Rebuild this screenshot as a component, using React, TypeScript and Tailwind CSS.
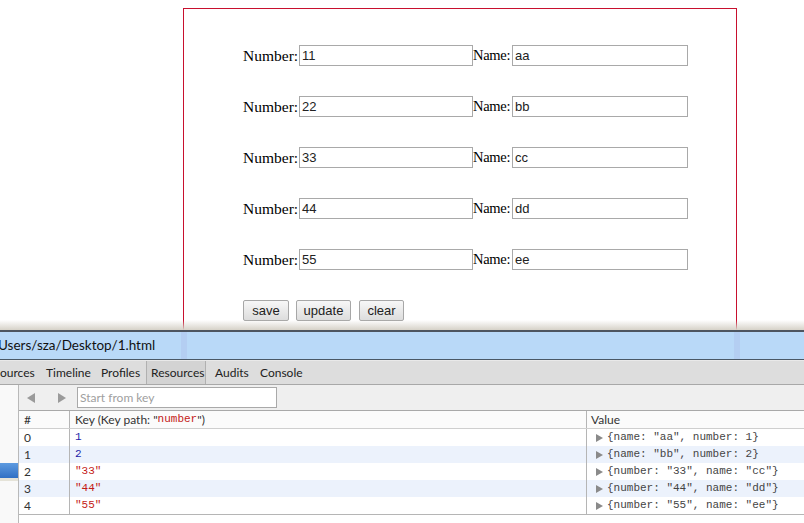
import React from "react";

const formRows = [
  ["11", "aa"],
  ["22", "bb"],
  ["33", "cc"],
  ["44", "dd"],
  ["55", "ee"],
];

const dataRows = [
  { i: "0", key: "1", num: true, val: '{name: "aa", number: 1}' },
  { i: "1", key: "2", num: true, val: '{name: "bb", number: 2}' },
  { i: "2", key: '"33"', num: false, val: '{number: "33", name: "cc"}' },
  { i: "3", key: '"44"', num: false, val: '{number: "44", name: "dd"}' },
  { i: "4", key: '"55"', num: false, val: '{number: "55", name: "ee"}' },
];

const serif = "font-['Liberation_Serif',serif]";
const ui = "font-['Lato','Noto_Sans',sans-serif]";
const mono = "font-['Liberation_Mono',monospace]";

function Btn({ label, w, ml }: { label: string; w: string; ml: string }) {
  return (
    <button
      className={`${w} ${ml} h-[21px] border border-[#a7a7a7] rounded-[2px] bg-gradient-to-b from-[#f7f7f7] to-[#dddddd] text-[13px] text-[#222] font-['Liberation_Sans',Arial,sans-serif] leading-none flex items-center justify-center`}
    >
      {label}
    </button>
  );
}

function Tri({ dir, cls }: { dir: "l" | "r"; cls: string }) {
  return (
    <svg width="10" height="10" viewBox="0 0 10 10" className={cls}>
      {dir === "l" ? <polygon points="9,0 9,10 1,5" fill="#9a9a9a" /> : <polygon points="1,0 1,10 9,5" fill="#9a9a9a" />}
    </svg>
  );
}

export default function App() {
  return (
    <div className="w-[804px] h-[523px] overflow-hidden bg-white flex flex-col">
      {/* page area */}
      <div className="relative h-[330px] shrink-0 overflow-hidden">
        <div className="ml-[183px] mt-[8px] w-[554px] h-[400px] border border-[#c8102e] pl-[59px] pt-[36px]">
          {formRows.map(([n, m], idx) => (
            <div key={idx} className="flex items-center h-[21px] mb-[30px]">
              <span className={`${serif} text-[15.5px] text-black w-[56px] whitespace-nowrap leading-none`}>Number:</span>
              <div className="w-[174px] h-[21px] border border-[#a9a9a9] bg-white pl-[2px] flex items-center text-[13px] text-[#222] font-['Liberation_Sans',Arial,sans-serif]">
                {n}
              </div>
              <span className={`${serif} text-[14.5px] tracking-[-0.3px] text-black w-[39px] whitespace-nowrap leading-none`}>Name:</span>
              <div className="w-[176px] h-[21px] border border-[#a9a9a9] bg-white pl-[2px] flex items-center text-[13px] text-[#222] font-['Liberation_Sans',Arial,sans-serif]">
                {m}
              </div>
            </div>
          ))}
          <div className="flex">
            <Btn label="save" w="w-[46px]" ml="ml-0" />
            <Btn label="update" w="w-[55px]" ml="ml-[7px]" />
            <Btn label="clear" w="w-[45px]" ml="ml-[8px]" />
          </div>
        </div>
        <div className="absolute left-0 right-0 bottom-0 h-[10px] bg-gradient-to-b from-white/0 to-[#d6d2c8]" />
      </div>

      {/* devtools */}
      <div className="h-[2px] bg-[#4d5560] shrink-0" />
      <div className={`relative h-[27px] shrink-0 bg-[#b9d9f8] flex items-center ${ui} text-[13.5px] text-[#111] overflow-hidden`}>
        <span className="-ml-[2px] whitespace-nowrap">Users/sza/Desktop/1.html</span>
        <div className="absolute top-0 bottom-0 left-[181px] w-[6px] bg-[#a9b6e4]/30" />
        <div className="absolute top-0 bottom-0 left-[734px] w-[6px] bg-[#a9b6e4]/30" />
      </div>
      <div className="h-[1px] bg-[#4a5866] shrink-0" />
      <div className="h-[1px] bg-[#e9e9e9] shrink-0" />
      <div className={`h-[23px] shrink-0 bg-[#dddddd] flex items-center ${ui} text-[12px] text-[#222] border-b border-[#a8a8a8] box-content`}>
        <div className="w-[41px] whitespace-nowrap">ources</div>
        <div className="w-[55px] pl-[5px] whitespace-nowrap">Timeline</div>
        <div className="w-[50px] pl-[5px] whitespace-nowrap">Profiles</div>
        <div className="w-[60px] h-full pl-[4px] flex items-center whitespace-nowrap bg-[#d3d3d3] border-l border-r border-[#b0b0b0]">Resources</div>
        <div className="w-[49px] pl-[9px] whitespace-nowrap">Audits</div>
        <div className="pl-[5px] whitespace-nowrap">Console</div>
      </div>

      <div className="flex flex-1 min-h-0">
        {/* sidebar */}
        <div className="w-[19px] shrink-0 bg-[#f9f9f9] border-r border-[#b9b9b9] flex flex-col">
          <div className="h-[78px]" />
          <div className="h-[15px] bg-gradient-to-b from-[#5e9be0] to-[#2f6fc4]" />
          <div className="h-[3px] bg-[#e5e3d8]" />
        </div>
        {/* main */}
        <div className="flex-1 flex flex-col">
          <div className="h-[25px] bg-[#efefef] flex items-center border-b border-[#a9a9a9] box-content">
            <Tri dir="l" cls="ml-[7px]" />
            <Tri dir="r" cls="ml-[21px]" />
            <div className={`ml-[10px] w-[200px] h-[21px] border border-[#a9a9a9] bg-white flex items-center pl-[2px] ${ui} text-[12px] text-[#a0a0a0]`}>
              Start from key
            </div>
          </div>
          <div className={`${ui} text-[12px] text-[#333]`}>
            <div className="flex h-[17px] border-b border-[#cfcfcf] bg-[#fbfbfb] box-content">
              <div className="w-[51px] pl-[5px] border-r border-[#b5b5b5] flex items-center">#</div>
              <div className="w-[517px] pl-[5px] border-r border-[#b5b5b5] flex items-center whitespace-nowrap">
                Key (Key path: "<span className={`${mono} text-[11px] text-[#c41a16]`}>number</span>")
              </div>
              <div className="flex-1 pl-[4px] flex items-center">Value</div>
            </div>
            {dataRows.map((r, idx) => (
              <div key={idx} className={`flex h-[17px] ${idx % 2 === 1 ? "bg-[#ecf2fc]" : "bg-white"}`}>
                <div className="w-[51px] pl-[5px] border-r border-[#b5b5b5] flex items-center">{r.i}</div>
                <div className={`w-[517px] pl-[5px] border-r border-[#b5b5b5] flex items-center ${mono} text-[11px] ${r.num ? "text-[#1c1ca8]" : "text-[#c41a16]"}`}>
                  {r.key}
                </div>
                <div className={`flex-1 pl-[9px] flex items-center ${mono} text-[11px] text-[#444] whitespace-nowrap`}>
                  <svg width="7" height="8" viewBox="0 0 7 8" className="mr-[4px]">
                    <polygon points="0,0 0,8 7,4" fill="#8a8a8a" />
                  </svg>
                  {r.val}
                </div>
              </div>
            ))}
            <div className="h-[1px] bg-[#b5b5b5]" />
          </div>
        </div>
      </div>
    </div>
  );
}
